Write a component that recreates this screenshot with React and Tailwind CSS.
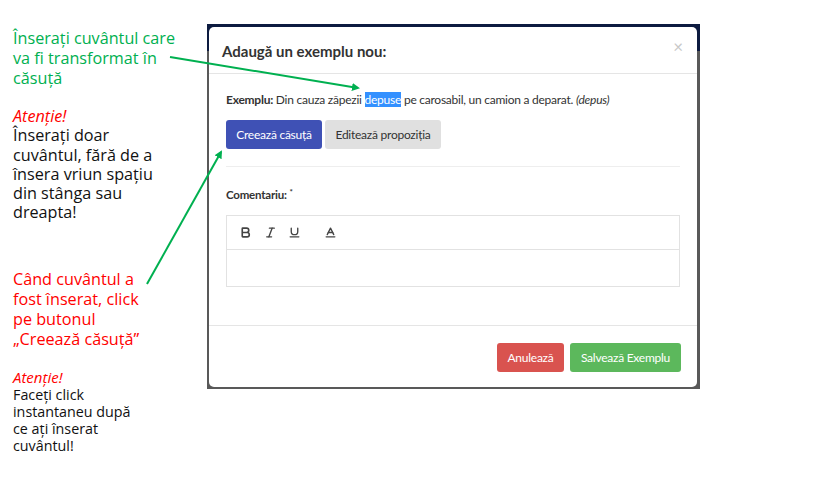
import React from "react";
import { Bold, Italic, Underline, Baseline } from "lucide-react";

export default function App() {
  return (
    <div className="relative w-[825px] h-[488px] bg-white flex overflow-hidden">
      {/* Left annotations */}
      <div className="w-[207px] shrink-0 pl-[13px] pt-[28px] font-['Open_Sans',sans-serif]">
        <div className="text-[16.2px] leading-[20px] text-[#00b050]">
          Înserați cuvântul care
          <br />
          va fi transformat în
          <br />
          căsuță
        </div>
        <div className="mt-[19px] text-[16.2px] leading-[19.3px] italic text-[#ff0000]">Atenție!</div>
        <div className="text-[16.2px] leading-[19.3px] text-[#111]">
          Înserați doar
          <br />
          cuvântul, fără de a
          <br />
          însera vriun spațiu
          <br />
          din stânga sau
          <br />
          dreapta!
        </div>
        <div className="mt-[46px] text-[16.2px] leading-[20px] text-[#ff0000]">
          Când cuvântul a
          <br />
          fost înserat, click
          <br />
          pe butonul
          <br />
          „Creează căsuță”
        </div>
        <div className="mt-[20px] text-[15px] leading-[17px] italic text-[#ff0000]">Atenție!</div>
        <div className="text-[14.3px] leading-[17px] text-[#111]">
          Faceți click
          <br />
          instantaneu după
          <br />
          ce ați înserat
          <br />
          cuvântul!
        </div>
      </div>

      {/* Screenshot of modal with backdrop */}
      <div className="mt-[24px] w-[493px] h-[365px] shrink-0 bg-[linear-gradient(#0d1b40_27px,#595959_27px)] pl-[2px] pt-[3px]">
        <div className="w-[488px] h-[360px] bg-white rounded-[5px] flex flex-col font-['Lato',sans-serif] text-[#333]">
          {/* header */}
          <div className="h-[47px] flex items-center justify-between pl-[13px] pr-[14px] pt-[3px] border-b border-[#e5e5e5]">
            <div className="text-[15px] font-bold text-[#333]">Adaugă un exemplu nou:</div>
            <div className="text-[17px] text-[#c8c8c8] leading-none -mt-[10px]">×</div>
          </div>
          {/* body */}
          <div className="flex-1 px-[17px] pt-[18px]">
            <div className="text-[12px] tracking-[-0.25px] leading-[16px] text-[#333]">
              <span className="font-bold">Exemplu:</span> Din cauza zăpezii{" "}
              <span className="bg-[#3390ff] text-white">depuse</span> pe carosabil, un camion a deparat.{" "}
              <span className="italic">(depus)</span>
            </div>
            <div className="mt-[12px] flex gap-[3px]">
              <div className="h-[29px] w-[96px] rounded-[3px] bg-[#3f51b5] text-white text-[12px] tracking-[-0.25px] flex items-center justify-center">
                Creează căsuță
              </div>
              <div className="h-[29px] w-[116px] rounded-[3px] bg-[#e0e0e0] text-[#333] text-[12px] tracking-[-0.25px] flex items-center justify-center">
                Editează propoziția
              </div>
            </div>
            <div className="mt-[17px] border-t border-[#eee]"></div>
            <div className="mt-[21px] text-[11.5px] font-bold leading-[14px] tracking-[-0.2px] text-[#333]">
              Comentariu: <sup className="text-[8px]">*</sup>
            </div>
            <div className="mt-[13px] h-[72px] border border-[#e2e2e2] flex flex-col">
              <div className="h-[34px] border-b border-[#e2e2e2] flex items-center pl-[12px] text-[#444]">
                <Bold size={13} strokeWidth={3} />
                <Italic size={13} strokeWidth={2.5} className="ml-[12px]" />
                <Underline size={13} strokeWidth={2.5} className="ml-[11px]" />
                <Baseline size={13} strokeWidth={2.5} className="ml-[23px]" />
              </div>
              <div className="flex-1"></div>
            </div>
          </div>
          {/* footer */}
          <div className="h-[62px] border-t border-[#e5e5e5] flex justify-end items-start pt-[17px] pr-[16px] gap-[6px]">
            <div className="h-[29px] w-[67px] rounded-[3px] bg-[#d9534f] text-white text-[12px] tracking-[-0.25px] flex items-center justify-center">
              Anulează
            </div>
            <div className="h-[29px] w-[111px] rounded-[3px] bg-[#5cb85c] text-white text-[12px] tracking-[-0.25px] flex items-center justify-center">
              Salvează Exemplu
            </div>
          </div>
        </div>
      </div>

      {/* Arrows */}
      <svg className="absolute inset-0 pointer-events-none" width="825" height="488" viewBox="0 0 825 488">
        <defs>
          <marker id="ah" markerWidth="8" markerHeight="8" refX="6" refY="4" orient="auto" markerUnits="userSpaceOnUse">
            <path d="M0,0 L8,4 L0,8 Z" fill="#00b050" />
          </marker>
        </defs>
        <line x1="170" y1="57" x2="358" y2="88" stroke="#00b050" strokeWidth="2" markerEnd="url(#ah)" />
        <line x1="147" y1="284" x2="221" y2="152" stroke="#00b050" strokeWidth="2" markerEnd="url(#ah)" />
      </svg>
    </div>
  );
}
